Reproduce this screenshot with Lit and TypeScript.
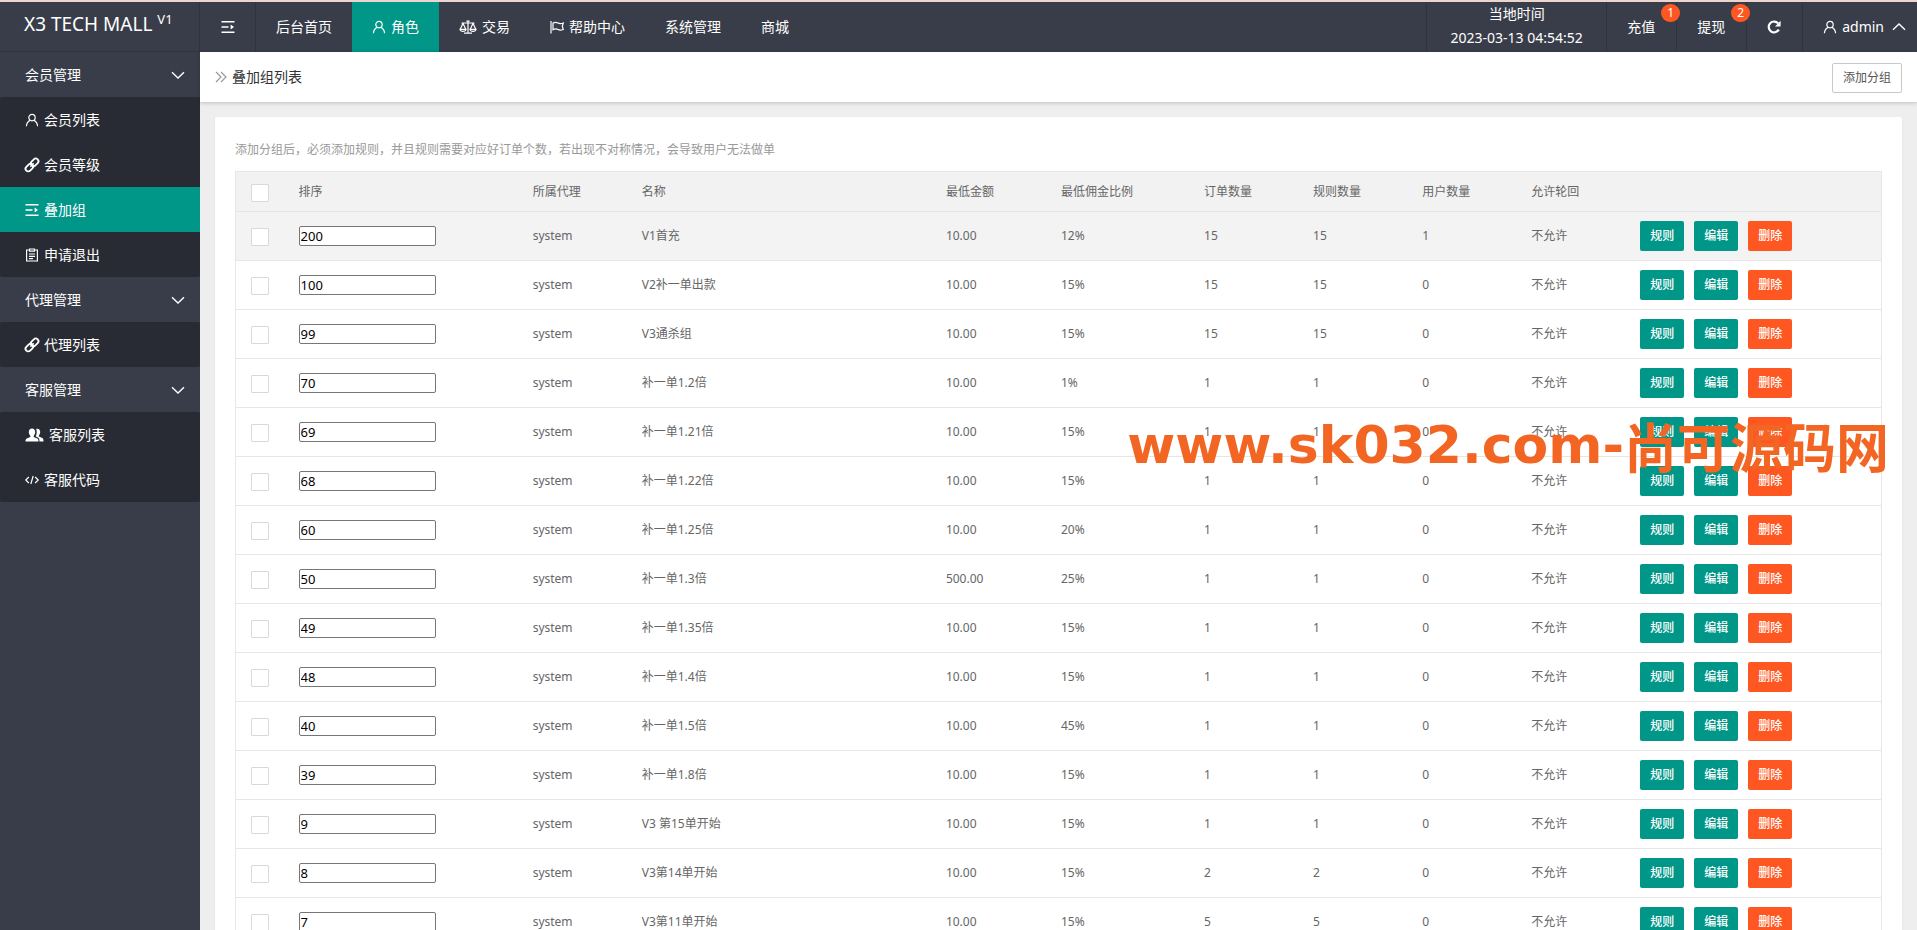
import { LitElement, html, css, svg } from "lit";
import { customElement, property, state } from "lit/decorators.js";
import { classMap } from "lit/directives/class-map.js";

const icons: Record<string, { w: number; body: unknown }> = {
  user: {
    w: 14,
    body: svg`<circle cx="7" cy="4.6" r="3.2"/><path d="M1.4 13.2C1.6 10.4 3 8.4 5.2 7.4M8.8 7.4c2.200 1 3.600 3 3.800 5.800"/>`,
  },
  link: {
    w: 14,
    body: svg`<g transform="rotate(-45 7 7)" stroke-width="1.8"><rect x="-1" y="4.300" width="8.600" height="5.400" rx="2.700"/><rect x="6.400" y="4.300" width="8.600" height="5.400" rx="2.700"/><path d="M4.600 7h4.800" stroke-width="1.300"/></g>`,
  },
  menu: {
    w: 14,
    body: svg`<g stroke-width="1.6"><path d="M.5 1.800h13M.5 7h7M.5 12.200h13"/></g><path d="M9.600 4.400v5.200L13 7z" fill="currentColor" stroke="none"/>`,
  },
  form: {
    w: 14,
    body: svg`<path d="M4 2H1.600v11h10.800V2H10M4.600 1h4.800v2.200H4.600zM4 6h6M4 8.300h6M4 10.600h4"/>`,
  },
  group: {
    w: 19,
    body: svg`<g fill="currentColor" stroke="none"><path d="M7 .5c2 0 3.200 1.500 3.200 3.600 0 1.500-.6 2.900-1.500 3.700v1.100l3.600 1.600c.8.400 1.200 1.200 1.200 3H.5c0-1.800.4-2.600 1.200-3l3.600-1.600V7.800C4.400 7 3.800 5.600 3.800 4.100 3.800 2 5 .5 7 .5z"/><path d="M11.200 1c.4-.2.800-.3 1.200-.3 1.800 0 2.800 1.400 2.800 3.300 0 1.300-.5 2.600-1.300 3.300v1.300l3.400 1.500c.8.400 1.200 1.200 1.200 3.400h-4c0-2.400-.5-3.300-1.600-3.900L10.600 8.200c.7-1 1.100-2.500 1.100-4 0-1.300-.1-2.300-.5-3.200z"/></g>`,
  },
  code: {
    w: 14,
    body: svg`<path d="M3.800 4 .8 7l3 3M10.200 4l3 3-3 3M8.200 3 5.800 11"/>`,
  },
  scale: {
    w: 18,
    body: svg`<path d="M2.500 3h13M9 1v12M5 13.200h8M7.400 1.200h3.200M4 3.300 1.300 9.300M4 3.300l2.700 6M14 3.300l-2.700 6M14 3.300l2.700 6"/><path d="M1 9.300h6c-.3 1.500-1.400 2-3 2s-2.700-.5-3-2zM11 9.300h6c-.3 1.500-1.400 2-3 2s-2.700-.5-3-2z"/>`,
  },
  flag: {
    w: 14,
    body: svg`<path d="M1 1v12.500M3 3c2-1 3.600-.8 5 0s3 .8 5.300 0l-1 3.300 1 3.200c-2.300.8-3.900.8-5.300 0s-3-.8-5 .2z"/>`,
  },
  refresh: {
    w: 14,
    body: svg`<path d="M11.800 9.600A5.400 5.400 0 1 1 11.200 3.400" stroke-width="2.200"/><path d="M13.600.8v5.600H8z" fill="currentColor" stroke="none"/>`,
  },
  down: { w: 14, body: svg`<path d="m1 4.200 6 5.800 6-5.800" stroke-width="1.400"/>` },
  up: { w: 14, body: svg`<path d="m1 9.800 6-5.800 6 5.800" stroke-width="1.400"/>` },
  crumb: { w: 12, body: svg`<path d="m1 2 5 5-5 5M6 2l5 5-5 5"/>` },
};

@customElement("ui-icon")
class UiIcon extends LitElement {
  @property() name = "user";
  static styles = css`
    :host { display: inline-flex; flex: none; }
    svg { display: block; height: 14px; fill: none; stroke: currentColor; stroke-width: 1.2; overflow: visible; }
  `;
  render() {
    const icon = icons[this.name];
    return html`<svg width=${icon.w} height="14" viewBox="0 0 ${icon.w} 14" aria-hidden="true">${icon.body}</svg>`;
  }
}

const topNav = [
  { label: "后台首页" },
  { label: "角色", icon: "user", active: true },
  { label: "交易", icon: "scale" },
  { label: "帮助中心", icon: "flag" },
  { label: "系统管理" },
  { label: "商城" },
];

@customElement("top-bar")
class TopBar extends LitElement {
  static styles = css`
    :host { display: block; background: #393d49; color: #fff; border-top: 2px solid #ecd5cf; }
    .bar { display: flex; height: 50px; justify-content: space-between; }
    .side { display: flex; min-width: 0; }
    .logo {
      box-sizing: border-box; width: 200px; padding: 0 24px; line-height: 44px; font-size: 19px;
      border-right: 1px solid #30333d; border-bottom: 1px solid #30333d; white-space: nowrap;
    }
    .logo sup { font-size: 13px; line-height: 13px; }
    a, button, .time {
      display: flex; align-items: center; gap: 5px; padding: 0 20px; box-sizing: border-box;
      color: #fff; text-decoration: none; white-space: nowrap; font: inherit; background: none; border: 0;
    }
    .toggle { border-right: 1px solid #30333d; width: 56px; padding: 0 21px; }
    .active { background: #009688; }
    .right > * { border-left: 1px solid #30333d; }
    .time { flex-direction: column; width: 180px; gap: 0; line-height: 24px; }
    .count { position: relative; width: 70px; }
    .badge {
      position: absolute; top: 2px; right: -4px; z-index: 1; width: 19px; height: 18px; line-height: 18px;
      border-radius: 9px; background: #ff5722; font-size: 12px; text-align: center;
    }
    .refresh { width: 56px; }
    .admin { padding: 0 11px 0 20px; gap: 5px; }
    .admin ui-icon + span { margin-right: 3px; }
  `;
  render() {
    return html`<header class="bar">
      <div class="side">
        <div class="logo">X3 TECH MALL <sup>V1</sup></div>
        <button class="toggle" aria-label="菜单"><ui-icon name="menu"></ui-icon></button>
        ${topNav.map(
          (n) => html`<a href="#" class=${classMap({ active: !!n.active })}>
            ${n.icon ? html`<ui-icon name=${n.icon}></ui-icon>` : ""}<span>${n.label}</span></a>`
        )}
      </div>
      <div class="side right">
        <div class="time"><span>当地时间</span><span>2023-03-13 04:54:52</span></div>
        <a class="count" href="#">充值<span class="badge">1</span></a>
        <a class="count" href="#">提现<span class="badge">2</span></a>
        <button class="refresh" aria-label="刷新"><ui-icon name="refresh"></ui-icon></button>
        <a class="admin" href="#"><ui-icon name="user"></ui-icon><span>admin</span><ui-icon name="up"></ui-icon></a>
      </div>
    </header>`;
  }
}

const sections = [
  {
    title: "会员管理",
    items: [
      { label: "会员列表", icon: "user" },
      { label: "会员等级", icon: "link" },
      { label: "叠加组", icon: "menu" },
      { label: "申请退出", icon: "form" },
    ],
  },
  { title: "代理管理", items: [{ label: "代理列表", icon: "link" }] },
  {
    title: "客服管理",
    items: [
      { label: "客服列表", icon: "group" },
      { label: "客服代码", icon: "code" },
    ],
  },
];

@customElement("side-nav")
class SideNav extends LitElement {
  @state() private current = "叠加组";
  static styles = css`
    :host { display: block; width: 200px; flex: none; background: #393d49; color: #fff; overflow: hidden; }
    .title {
      display: flex; align-items: center; justify-content: space-between; box-sizing: border-box;
      width: 100%; height: 45px; padding: 0 15px 0 25px; border: 0; background: none; color: inherit; font: inherit;
    }
    .items { background: #282b33; border-radius: 2px; }
    .item {
      display: flex; align-items: center; gap: 5px; height: 45px; padding: 0 25px;
      color: #fff; text-decoration: none;
    }
    .active { background: #009688; }
  `;
  render() {
    return html`<nav>
      ${sections.map(
        (s) => html`<button class="title"><span>${s.title}</span><ui-icon name="down"></ui-icon></button>
          <div class="items">
            ${s.items.map(
              (i) => html`<a href="#" class=${classMap({ item: true, active: i.label === this.current })}
                @click=${() => (this.current = i.label)}><ui-icon name=${i.icon}></ui-icon><span>${i.label}</span></a>`
            )}
          </div>`
      )}
    </nav>`;
  }
}

const rows = [
  [200, "V1首充", "10.00", "12%", 15, 15, 1],
  [100, "V2补一单出款", "10.00", "15%", 15, 15, 0],
  [99, "V3通杀组", "10.00", "15%", 15, 15, 0],
  [70, "补一单1.2倍", "10.00", "1%", 1, 1, 0],
  [69, "补一单1.21倍", "10.00", "15%", 1, 1, 0],
  [68, "补一单1.22倍", "10.00", "15%", 1, 1, 0],
  [60, "补一单1.25倍", "10.00", "20%", 1, 1, 0],
  [50, "补一单1.3倍", "500.00", "25%", 1, 1, 0],
  [49, "补一单1.35倍", "10.00", "15%", 1, 1, 0],
  [48, "补一单1.4倍", "10.00", "15%", 1, 1, 0],
  [40, "补一单1.5倍", "10.00", "45%", 1, 1, 0],
  [39, "补一单1.8倍", "10.00", "15%", 1, 1, 0],
  [9, "V3 第15单开始", "10.00", "15%", 1, 1, 0],
  [8, "V3第14单开始", "10.00", "15%", 2, 2, 0],
  [7, "V3第11单开始", "10.00", "15%", 5, 5, 0],
];

const heads = ["排序", "所属代理", "名称", "最低金额", "最低佣金比例", "订单数量", "规则数量", "用户数量", "允许轮回", ""];
const cols = ["check", "sort", "num", "name", "money", "rate", "num", "num", "num", "num", "ops"];

@customElement("group-table")
class GroupTable extends LitElement {
  static styles = css`
    :host { display: block; }
    table {
      width: 100%; table-layout: fixed; border-collapse: collapse; border: 1px solid #e6e6e6;
      font-size: 12px; line-height: 20px; color: #666;
    }
    .check { width: 48px; }
    .sort { width: 234px; }
    .num { width: 109px; }
    .name { width: 304px; }
    .money { width: 115px; }
    .rate { width: 143px; }
    .ops { width: 256px; }
    th, td { padding: 0 15px; text-align: left; font-weight: 400; border-bottom: 1px solid #e6e6e6; white-space: nowrap; }
    th { height: 39px; background: #f2f2f2; }
    td { height: 48px; }
    tbody tr:first-child, tbody tr:hover { background: #f3f3f3; }
    input { box-sizing: border-box; margin: 0; background: #fff; vertical-align: middle; }
    input[type="checkbox"] {
      appearance: none; display: block; width: 18px; height: 18px; margin-top: 2px;
      border: 1px solid #d9d9d9; border-radius: 1px;
    }
    input[type="checkbox"]:checked { background: #009688; }
    input[type="text"] {
      display: block; width: 137px; height: 20px; padding: 1px; border: 1px solid #767676; border-radius: 2px;
      font: 13px/16px "Noto Sans", "Noto Sans CJK SC", sans-serif; color: #000;
    }
    .actions { display: flex; gap: 10px; }
    button {
      width: 44px; height: 30px; padding: 0; border: 0; border-radius: 2px; background: #009688; color: #fff;
      font: inherit; font-weight: 500; cursor: pointer;
    }
    .danger { background: #ff5722; }
  `;
  render() {
    return html`<table>
      <colgroup>${cols.map((c) => html`<col class=${c} />`)}</colgroup>
      <thead>
        <tr>
          <th><input type="checkbox" aria-label="全选" /></th>
          ${heads.map((h) => html`<th scope="col">${h}</th>`)}
        </tr>
      </thead>
      <tbody>
        ${rows.map(
          ([sort, name, money, rate, orders, rules, users]) => html`<tr>
            <td><input type="checkbox" aria-label="选择 ${name}" /></td>
            <td><input type="text" aria-label="排序 ${name}" .value=${String(sort)} /></td>
            <td>system</td>
            <td>${name}</td>
            <td>${money}</td>
            <td>${rate}</td>
            <td>${orders}</td>
            <td>${rules}</td>
            <td>${users}</td>
            <td>不允许</td>
            <td>
              <div class="actions">
                <button>规则</button><button>编辑</button><button class="danger">删除</button>
              </div>
            </td>
          </tr>`
        )}
      </tbody>
    </table>`;
  }
}

@customElement("app-root")
class AppRoot extends LitElement {
  static styles = css`
    :host {
      position: relative; display: flex; flex-direction: column; height: 100vh; overflow: hidden;
      font: 14px/20px "Noto Sans", "Noto Sans CJK SC", sans-serif; background: #eee;
    }
    top-bar { flex: none; }
    .body { display: flex; flex: 1; min-height: 0; }
    main { flex: 1; min-width: 0; display: flex; flex-direction: column; }
    .crumbs {
      flex: none; display: flex; align-items: center; justify-content: space-between; height: 50px; padding: 0 15px;
      background: #fff; color: #333; box-shadow: 0 1px 4px rgba(0, 0, 0, 0.2);
    }
    .title { display: flex; align-items: center; gap: 5px; margin: 0; font: inherit; }
    .title ui-icon { color: #999; }
    .add {
      box-sizing: border-box; height: 30px; padding: 0 10px; border: 1px solid #c9c9c9; border-radius: 2px;
      background: #fff; color: #555; font: inherit; font-size: 12px; margin-top: 2px;
    }
    .scroll { flex: 1; min-height: 0; overflow: auto; scrollbar-width: none; padding: 15px; }
    .card { background: #fff; padding: 20px; box-shadow: 0 1px 2px rgba(0, 0, 0, 0.1); border-radius: 2px; }
    .note { margin: 0 0 11px; padding-top: 3px; font-size: 12px; color: #999; }
    .mark {
      position: absolute; top: 413px; right: 28px; display: flex; align-items: center; pointer-events: none;
      color: #f26522; font: bold 52px/64px "DejaVu Sans", sans-serif; white-space: nowrap;
    }
    .mark .cjk { font: bold 53px/60px "Noto Sans CJK SC", sans-serif; }
  `;
  render() {
    return html`<top-bar></top-bar>
      <div class="body">
        <side-nav></side-nav>
        <main>
          <div class="crumbs">
            <h1 class="title"><ui-icon name="crumb"></ui-icon>叠加组列表</h1>
            <button class="add">添加分组</button>
          </div>
          <div class="scroll">
            <div class="card">
              <p class="note">添加分组后，必须添加规则，并且规则需要对应好订单个数，若出现不对称情况，会导致用户无法做单</p>
              <group-table></group-table>
            </div>
          </div>
        </main>
      </div>
      <div class="mark"><span>www.sk032.com-</span><span class="cjk">尚可源码网</span></div>`;
  }
}
